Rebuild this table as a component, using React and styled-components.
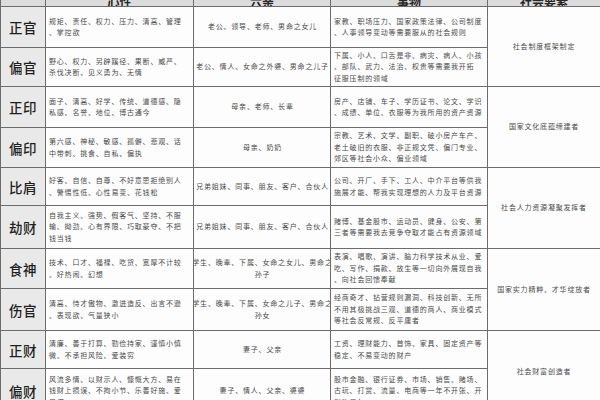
import React from 'react';
import styled, { createGlobalStyle } from 'styled-components';

const GlobalStyle = createGlobalStyle`
  html, body {
    margin: 0;
    padding: 0;
    width: 600px;
    height: 400px;
    overflow: hidden;
    background: #fafafa;
  }
`;

const Table = styled.div`
  display: grid;
  grid-template-columns: 44px 147px 136px 156px 112px;
  grid-template-rows: 6px 40px 38px 40px 39px 37px 42px 39px 41px 37px 44px;
  gap: 1px;
  padding-left: 1px;
  background: #6c6c6c;
  width: 600px;
  height: 420px;
  font-family: "Noto Sans CJK SC", "Liberation Serif", serif;
  color: #4a4a4a;
`;

const HeadCell = styled.div`
  background: #dcdcdc;
  overflow: hidden;
  display: flex;
  align-items: flex-end;
  justify-content: center;

  span {
    display: block;
    font-size: 12px;
    line-height: 12px;
    font-weight: 700;
    color: #262626;
    margin-bottom: -2px;
  }
`;

const LabelCell = styled.div`
  background: #e9e9e9;
  display: flex;
  align-items: center;
  justify-content: center;
  font-size: 13.5px;
  font-weight: 500;
  color: #1f1f1f;
  letter-spacing: 0.5px;
`;

const TextCell = styled.div`
  background: #fdfdfd;
  display: flex;
  flex-direction: column;
  justify-content: center;
  align-items: ${p => (p.$center ? 'center' : 'flex-start')};
  text-align: ${p => (p.$center ? 'center' : 'left')};
  padding: 0 2px 0 3px;
  font-size: 7px;
  letter-spacing: 0.8px;
  line-height: 11.5px;
  white-space: nowrap;
  overflow: hidden;
`;

const SocialCell = styled(TextCell)`
  grid-row: span 2;
  align-items: center;
  padding: 0;
`;

const rows = [
  {
    name: '正官',
    nature: ['规矩、责任、权力、压力、清高、管理', '、掌控欲'],
    kin: ['老公、领导、老师、男命之女儿'],
    things: ['家教、职场压力、国家政策法律、公司制度', '、人事领导变动等需要服从的社会规则'],
    social: '社会制度框架制定',
  },
  {
    name: '偏官',
    nature: ['野心、权力、另辟蹊径、果断、威严、', '杀伐决断、见义勇为、无情'],
    kin: ['老公、情人、女命之外婆、男命之儿子'],
    things: ['下属、小人、口舌是非、病灾、病人、小孩', '、部队、武力、法治、权贵等需要我开拓', '征服压制的领域'],
  },
  {
    name: '正印',
    nature: ['面子、清高、好学、传统、道德感、隐', '私感、名誉、地位、博古通今'],
    kin: ['母亲、老师、长辈'],
    things: ['房产、店铺、车子、学历证书、论文、学识', '、成绩、单位、衣服等为我所用的资产资源'],
    social: '国家文化底蕴缔建者',
  },
  {
    name: '偏印',
    nature: ['第六感、神秘、敏感、孤僻、悲观、话', '中带刺、挑食、自私、偏执'],
    kin: ['母亲、奶奶'],
    things: ['宗教、艺术、文学、副职、破小房产车产、', '老土破旧的衣服、非正规文凭、偏门专业、', '郊区等社会小众、偏业领域'],
  },
  {
    name: '比肩',
    nature: ['好客、自信、自尊、不好意思拒绝别人', '、警惕性低、心性易变、花钱松'],
    kin: ['兄弟姐妹、同事、朋友、客户、合伙人'],
    things: ['公司、开厂、手下、工人、中介平台等供我', '施展才能、帮我实现理想的人力及平台资源'],
    social: '社会人力资源凝聚发挥者',
  },
  {
    name: '劫财',
    nature: ['自我主义、强势、假客气、坚持、不服', '输、拗劲、心有界限、巧取豪夺、不把', '钱当钱'],
    kin: ['兄弟姐妹、同事、朋友、客户、合伙人'],
    things: ['赌博、基金股市、运动员、健身、公安、第', '三者等需要我去竞争夺取才能占有资源领域'],
  },
  {
    name: '食神',
    nature: ['技术、口才、福禄、吃货、宽厚不计较', '、好热闹、幻想'],
    kin: ['学生、晚辈、下属、女命之女儿、男命之', '孙子'],
    things: ['表演、唱歌、演讲、脑力科学技术从业、爱', '吃、写作、捐款、放生等一切向外展现自我', '、向社会回馈奉献'],
    social: '国家实力精粹、才华绽放者',
  },
  {
    name: '伤官',
    nature: ['清高、恃才傲物、激进造反、出言不逊', '、表现欲、气量狭小'],
    kin: ['学生、晚辈、下属、女命之儿子、男命之', '孙女'],
    things: ['经商奇才、钻营规则漏洞、科技创新、无所', '不用其极挑战三观、道德的商人、商业模式', '等社会反常规、反平庸者'],
  },
  {
    name: '正财',
    nature: ['清廉、善于打算、勤俭持家、谨慎小慎', '微、不承担风险、爱装穷'],
    kin: ['妻子、父亲'],
    things: ['工资、理财能力、首饰、家具、固定资产等', '稳定、不易变动的财产'],
    social: '社会财富创造者',
  },
  {
    name: '偏财',
    nature: ['风流多情、以财示人、慷慨大方、易在', '钱财上损误、不拘小节、乐善好施、爱', '显摆'],
    kin: ['妻子、情人、父亲、婆婆'],
    things: ['股市金融、银行证券、市场、销售、赌场、', '古玩、打赏、流量、电商等一年不开张、开', '张吃三年'],
  },
];

const Lines = ({ lines }) => lines.map((l, i) => <span key={i}>{l}</span>);

export default function App() {
  return (
    <>
      <GlobalStyle />
      <Table>
        <HeadCell />
        <HeadCell><span>心性</span></HeadCell>
        <HeadCell><span>六亲</span></HeadCell>
        <HeadCell><span>事物</span></HeadCell>
        <HeadCell><span>社会要素</span></HeadCell>
        {rows.map(r => (
          <React.Fragment key={r.name}>
            <LabelCell>{r.name}</LabelCell>
            <TextCell><Lines lines={r.nature} /></TextCell>
            <TextCell $center><Lines lines={r.kin} /></TextCell>
            <TextCell><Lines lines={r.things} /></TextCell>
            {r.social && <SocialCell $center>{r.social}</SocialCell>}
          </React.Fragment>
        ))}
      </Table>
    </>
  );
}
